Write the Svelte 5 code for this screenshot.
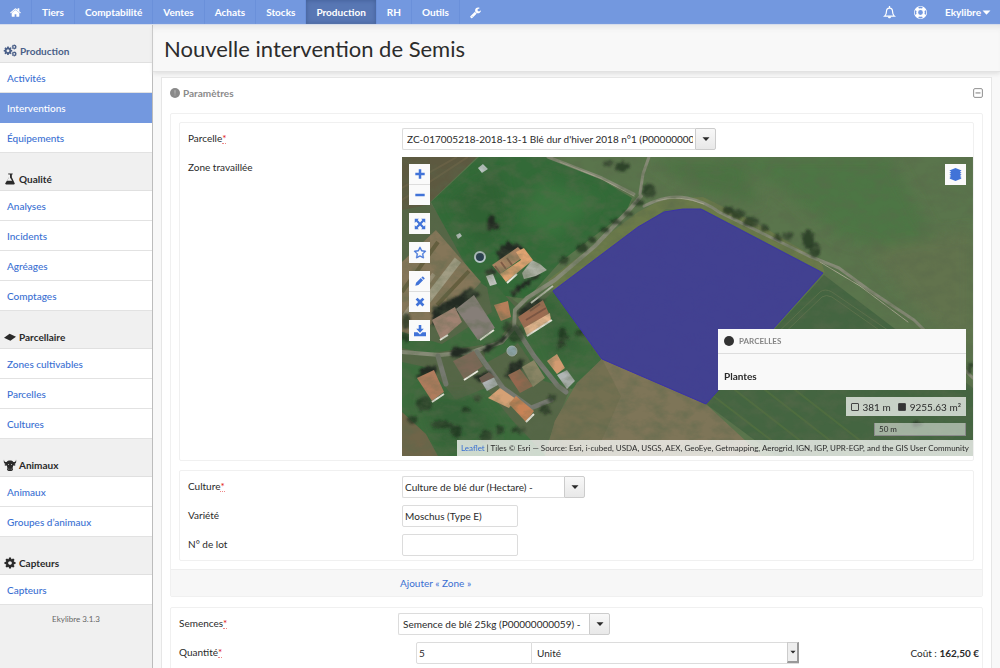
<script>
  const menu = ['Tiers', 'Comptabilité', 'Ventes', 'Achats', 'Stocks', 'Production', 'RH', 'Outils'];
  const groups = [
    { title: 'Production', icon: 'gears', items: ['Activités', 'Interventions', 'Équipements'] },
    { title: 'Qualité', icon: 'flask', items: ['Analyses', 'Incidents', 'Agréages', 'Comptages'] },
    { title: 'Parcellaire', icon: 'land', items: ['Zones cultivables', 'Parcelles', 'Cultures'] },
    { title: 'Animaux', icon: 'cow', items: ['Animaux', 'Groupes d’animaux'] },
    { title: 'Capteurs', icon: 'gear', items: ['Capteurs'] }
  ];
  const tools = [
    [['plus', 'Zoom avant'], ['minus', 'Zoom arrière']],
    [['expand', 'Plein écran']],
    [['star', 'Favori']],
    [['pencil', 'Modifier'], ['cross', 'Supprimer']],
    [['download', 'Importer']]
  ];
  const gearPath = 'M1152 896q0-106-75-181t-181-75-181 75-75 181 75 181 181 75 181-75 75-181zm512-109v222q0 12-8 23t-20 13l-185 28q-19 54-39 91 35 50 107 138 10 12 10 25t-9 23q-27 37-99 108t-94 71q-12 0-26-9l-138-108q-44 23-91 38-16 136-29 186-7 28-36 28h-222q-14 0-24.5-8.5t-11.5-21.5l-28-184q-49-16-90-37l-141 107q-10 9-25 9-14 0-25-11-126-114-165-168-7-10-7-23 0-12 8-23 15-21 51-66.5t54-70.5q-27-50-41-99l-183-27q-13-2-21-12.5t-8-23.5v-222q0-12 8-23t19-13l186-28q14-46 39-92-40-57-107-138-10-12-10-24 0-10 9-23 26-36 98.5-107.5t94.5-71.5q13 0 26 10l138 107q44-23 91-38 16-136 29-186 7-28 36-28h222q14 0 24.5 8.5t11.5 21.5l28 184q49 16 90 37l142-107q9-9 24-9 13 0 25 10 129 119 165 170 7 8 7 22 0 12-8 23-15 21-51 66.5t-54 70.5q26 50 41 98l183 28q13 2 21 12.5t8 23.5z';
  // Tree crowns of the aerial view: centre, radii
  const trees = [
    [649, 191, 7, 7], [639, 203, 5, 4], [628, 214, 4, 3], [582, 248, 6, 5], [564, 260, 5, 4],
    [728, 210, 5, 4], [738, 214, 7, 5], [751, 222, 8, 5], [765, 228, 4, 3], [788, 236, 5, 4], [808, 240, 6, 10], [815, 250, 6, 7], [778, 238, 4, 3],
    [516, 334, 8, 9], [508, 327, 5, 5], [563, 336, 4, 8], [560, 345, 3, 4], [580, 333, 4, 3], [424, 404, 8, 7], [432, 375, 3, 4],
    [442, 425, 11, 4], [456, 431, 6, 6], [486, 436, 6, 6], [478, 398, 4, 3], [518, 430, 7, 3], [545, 410, 6, 4], [552, 398, 4, 4], [412, 420, 5, 4],
    [500, 430, 4, 4], [466, 410, 5, 3], [622, 167, 7, 5], [608, 164, 5, 3], [604, 230, 5, 3], [592, 240, 4, 3], [616, 222, 5, 3],
    [406, 322, 4, 8], [405, 337, 4, 5], [918, 424, 5, 3], [970, 368, 3, 6]
  ];
  const roofs = [
    ['522,273 532,260 540,264 547,270 536,276 524,279', '#aeb2a6'],
    ['492,265 518,247 526,255 500,274', '#a98362'], ['500,274 521,260 516,252 524,248 533,260 506,282', '#dfa371'],
    ['486,276 493,274 497,284 490,286', '#bfc2bd'], ['494,305 508,301 511,317 501,321', '#b67f5a'],
    ['456,309 474,295 495,328 478,340', '#867e78'], ['432,320 455,307 462,322 441,340', '#a08272'],
    ['518,317 543,300 551,318 526,332', '#9c6c51'], ['524,328 550,313 551,321 527,336', '#e3b48c'],
    ['453,361 474,351 483,366 464,379', '#7f6858'], ['417,378 434,370 444,392 432,401', '#b07b5d'],
    ['508,375 520,369 533,386 520,393', '#956850'], ['522,367 534,360 545,378 533,387', '#8a8565'],
    ['547,361 557,354 565,368 557,374', '#d39b71'], ['557,375 567,370 575,381 567,389', '#b0b5b4'],
    ['488,398 500,388 516,399 509,408', '#d5a174'], ['509,404 516,396 534,411 526,422', '#c88357'],
    ['481,381 493,376 498,385 487,391', '#aeb3b5'], ['479,378 489,372 495,377 482,383', '#6d5a50']
  ];
</script>

{#snippet icon(name)}
  <svg class="icon {name}" viewBox={['home', 'wrench', 'gear', 'flask', 'star'].includes(name) ? '64 64 1664 1664' : '0 0 16 16'} aria-hidden="true">
    {#if name === 'home'}
      <path d="M1472 992v480q0 26-19 45t-45 19h-384v-384h-256v384h-384q-26 0-45-19t-19-45v-480q0-1 .5-3t.5-3l575-474 575 474q1 2 1 6zm223-69l-62 74q-8 9-21 11h-3q-13 0-21-7l-692-577-692 577q-12 8-24 7-13-2-21-11l-62-74q-8-10-7-23.5t11-21.5l719-599q32-26 76-26t76 26l244 204v-195q0-14 9-23t23-9h192q14 0 23 9t9 23v408l219 182q10 8 11 21.5t-7 23.5z" />
    {:else if name === 'wrench'}
      <path d="M448 1472q0-26-19-45t-45-19-45 19-19 45 19 45 45 19 45-19 19-45zm644-420l-682 682q-37 37-90 37-52 0-91-37l-106-108q-38-36-38-90 0-53 38-91l681-681q39 98 114.5 173.5t173.5 114.5zm634-435q0 39-23 106-47 134-164.5 217.5t-258.5 83.5q-185 0-316.5-131.5t-131.5-316.5 131.5-316.5 316.5-131.5q58 0 121.5 16.5t107.5 46.5q16 11 16 28t-16 28l-293 169v224l193 107q5-3 79-48.5t135.5-81 70.5-35.5q15 0 23.5 10t8.5 25z" />
    {:else if name === 'gear'}
      <path d={gearPath} />
    {:else if name === 'gears'}
      <path d={gearPath} transform="translate(-1.2 2.2) scale(.0068)" />
      <path d={gearPath} transform="translate(9 0) scale(.004)" />
      <path d={gearPath} transform="translate(9 8.6) scale(.004)" />
    {:else if name === 'flask'}
      <path d="M1527 1447q56 89 21.5 153t-140.5 64h-1024q-106 0-140.5-64t21.5-153l503-793v-399h-64q-26 0-45-19t-19-45 19-45 45-19h512q26 0 45 19t19 45-19 45-45 19h-64v399zm-779-725l-272 430h712l-272-430-20-31v-436h-128v436z" />
    {:else if name === 'star'}
      <path d="M1201 1004l306-297-422-62-189-382-189 382-422 62 306 297-73 421 378-199 377 199zm527-357q0 22-26 48l-363 354 86 500q1 7 1 20 0 50-41 50-19 0-40-12l-449-236-449 236q-22 12-40 12-21 0-31.5-14.5t-10.5-35.5q0-6 2-20l86-500-364-354q-25-27-25-48 0-37 56-46l502-73 225-455q19-41 49-41t49 41l225 455 502 73q56 9 56 46z" />
    {:else if name === 'land'}
      <path d="M0 9 7.500 3.500 16 7.500 8.500 13z" />
    {:else if name === 'cow'}
      <path d="M0 .5C0 3 1 4 3.500 4c1-1.500 2.500-2 4.500-2s3.500.5 4.500 2C15 4 16 3 16 .5c1 3-.2 5.500-2 6.200l1.500 1.300c-1 1-2.300 1-3.300.7L11.500 12l.5 2.500L10 16H6l-2-1.500.5-2.500-.7-3.300C2.800 9 1.500 9 .5 8L2 6.700C.2 6-1 3.500 0 .5z" />
      <path class="hole" d="M5.300 6.500h1.200v1.200H5.300zM9.500 6.500h1.200v1.200H9.500zM6 13h1v1H6zM9 13h1v1H9z" />
    {:else if name === 'bell'}
      <path class="line" d="M2 12.500C3.800 11 4.300 9 4.300 6.500 4.300 4 5.800 2.500 8 2.500s3.700 1.500 3.700 4c0 2.500.5 4.500 2.300 6z" />
      <path d="M7.200 0h1.600v2.500H7.200zM6 13h4c0 1.400-.8 2.200-2 2.200S6 14.400 6 13z" />
    {:else if name === 'ring'}
      <circle class="line thick" cx="8" cy="8" r="5.200" />
      <circle class="line thin" cx="8" cy="8" r="7.200" />
      <path class="gap" d="M5.700 2.200a6 6 0 0 1 4.600 0M5.700 13.800a6 6 0 0 0 4.600 0M2.200 5.700a6 6 0 0 0 0 4.600M13.800 5.700a6 6 0 0 1 0 4.600" />
    {:else if name === 'caret'}
      <path d="M1 4.500h14L8 12z" />
    {:else if name === 'plus'}
      <path d="M6 .5h4V6h5.500v4H10v5.500H6V10H.5V6H6z" />
    {:else if name === 'minus'}
      <path d="M.5 6h15v4H.5z" />
    {:else if name === 'expand'}
      <path d="M1 1h5.500L4.800 2.800 8 6l3.200-3.200L9.500 1H15v5.500l-1.800-1.700L10 8l3.200 3.200L15 9.500V15H9.500l1.700-1.800L8 10l-3.200 3.200L6.500 15H1V9.500l1.800 1.700L6 8 2.800 4.800 1 6.500z" />
    {:else if name === 'pencil'}
      <path d="M.5 15.500l1.200-4.800 7.600-7.500 3.600 3.600-7.500 7.500zM10.200 2.300l1.300-1.300q.8-.7 1.600 0l2 2q.7.8 0 1.600l-1.300 1.300z" />
    {:else if name === 'cross'}
      <path d="M4 1 8 4.900 12 1l3 3-3.900 4L15 12l-3 3-4-3.900L4 15l-3-3 3.900-4L1 4z" />
    {:else if name === 'download'}
      <path d="M6.300 0h3.400v5H13L8 10.200 3 5h3.300zM0 9.500h4.800L8 12.600l3.200-3.100H16v5.500H0z" />
    {:else if name === 'layers'}
      <path d="M8 0l7.500 3.200L13.300 4.500l2.200 1.300L13.300 7.100l2.200 1.300-2.200 1.300 2.200 1.300-1.500.9 1.500.9L8 16 .5 12.800l1.500-.9L.5 11l2.200-1.300L.5 8.400l2.200-1.300L.5 5.800l2.200-1.300L.5 3.200z" />
    {:else if name === 'alert'}
      <circle cx="8" cy="8" r="8" />
      <path class="mark" d="M7 3.500h2L8.700 9H7.300zM7.200 10.500h1.600V12H7.200z" />
    {:else if name === 'collapse'}
      <rect class="line" x="1" y="1" width="14" height="14" rx="2" />
      <path d="M4 7h8v1.800H4z" />
    {/if}
  </svg>
{/snippet}

{#snippet combo(id, value, kind)}
  <div class="combo {kind}">
    <input {id} type="text" {value} />
    <button type="button" aria-label="Ouvrir la liste">{@render icon('caret')}</button>
  </div>
{/snippet}

<div class="page">
  <header>
    <nav>
      <a href="#accueil" aria-label="Accueil">{@render icon('home')}</a>
      {#each menu as entry}
        <a href="#{entry}" class:active={entry === 'Production'}>{entry}</a>
      {/each}
      <a class="last" href="#reglages" aria-label="Réglages">{@render icon('wrench')}</a>
    </nav>
    <div class="account">
      <button type="button" aria-label="Notifications">{@render icon('bell')}</button>
      <button type="button" aria-label="Aide">{@render icon('ring')}</button>
      <button type="button">Ekylibre{@render icon('caret')}</button>
    </div>
  </header>

  <div class="body">
    <aside>
      {#each groups as group, index}
        <section>
          <h2 class:current={index === 0}>{@render icon(group.icon)}{group.title}</h2>
          <ul>
            {#each group.items as item}
              <li><a href="#{item}" class:active={item === 'Interventions'}>{item}</a></li>
            {/each}
          </ul>
        </section>
      {/each}
      <p>Ekylibre 3.1.3</p>
    </aside>

    <main>
      <div class="title"><h1>Nouvelle intervention de Semis</h1></div>

      <form class="panel">
        <div class="panel-head">
          <h2>{@render icon('alert')}Paramètres</h2>
          <button type="button" aria-label="Replier">{@render icon('collapse')}</button>
        </div>

        <div class="block">
          <div class="nested">
            <div class="box">
              <div class="row">
                <label for="parcelle">Parcelle<abbr title="obligatoire">*</abbr></label>
                {@render combo('parcelle', "ZC-017005218-2018-13-1 Blé dur d'hiver 2018 n°1 (P00000000079)", 'wide')}
              </div>
              <div class="row">
                <span class="label">Zone travaillée</span>
                <div class="map">
                  <svg class="aerial" viewBox="402 157 571 299" preserveAspectRatio="xMidYMid slice" aria-label="Vue aérienne">
                    <defs>
                      <filter id="grain" x="0" y="0" width="100%" height="100%">
                        <feTurbulence type="fractalNoise" baseFrequency=".06 .09" numOctaves="5" seed="7" />
                        <feColorMatrix values="0 0 0 0 .1  0 0 0 0 .14  0 0 0 0 .07  1.1 0 0 0 -.42" />
                      </filter>
                      <filter id="rough" x="-20%" y="-20%" width="140%" height="140%">
                        <feTurbulence type="fractalNoise" baseFrequency=".25" numOctaves="2" seed="3" result="noise" />
                        <feDisplacementMap in="SourceGraphic" in2="noise" scale="6" xChannelSelector="R" yChannelSelector="G" />
                        <feGaussianBlur stdDeviation=".8" />
                      </filter>
                      <filter id="edge"><feGaussianBlur stdDeviation=".5" /></filter>
                      <filter id="soft"><feGaussianBlur stdDeviation="7" /></filter>
                      <clipPath id="crop"><path d="M824 275 706 404 776 456H973V388z" /></clipPath>
                    </defs>
                    <path fill="#5a754c" d="M402 157h571v299H402z" />
                    <g filter="url(#soft)">
                      <path fill="#4e7645" d="M720 157l170 0 60 110-110-30-60-50z" />
                      <path fill="#62734d" d="M870 250l103-20v120l-50-35z" />
                      <path fill="#4c7243" d="M650 160l90 0 20 45-60-14z" />
                    </g>
                    <path fill="#556646" d="M402 157h73l-45 45 45 68 45 35 33-14 49 68-30 25-30 72H402z" />
                    <path fill="#5d5940" d="M402 157h75l-50 48-25 5z" />
                    <path fill="none" stroke="#70664a" stroke-width="2" opacity=".6" d="M402 188l55-31M402 200l66-43" />
                    <path fill="#336a38" d="M431 202l48-45h69l54 23 30 18-6 14-66 50-33 37-28-4-26-17z" />
                    <g filter="url(#soft)" opacity=".7">
                      <path fill="#3d783f" d="M540 180l60 20-50 40-30-20z" />
                      <path fill="#2d5f33" d="M450 200l50-30 10 60-30 20z" />
                    </g>
                    <path fill="#857659" d="M402 262l34-32 45 52-20 22-59 40z" />
                    <g fill="none" stroke-width="4">
                      <path stroke="#a29d84" stroke-width="8" d="M424 304l34-44" />
                      <path stroke="#9c9178" d="M404 316l30-42" />
                      <path stroke="#655e3e" d="M402 292l36-50M437 305l32-34" />
                    </g>
                    <path fill="#3c6b3c" d="M484 272l34 38-20 32-70 12-26-6v-16l40 12 50-32zM483 345l34-16 36-38 49 70-30 28-28-8-26-38-14 10-18 10zM402 362l28 6 26 32 30-12 26 32 34 36H402z" />
                    <g filter="url(#soft)" opacity=".7"><path fill="#335f36" d="M530 300l25 0 30 50-30 10zM420 395l50 0 30 40-60 15z" /></g>
                    <path fill="#7e7558" d="M602 359l104 45 56 52H545l10-35 22-38z" />
                    <path fill="#716d4f" d="M602 359l-25 24-22 38-10 35h50l26-60z" opacity=".7" />
                    <path fill="#6f6549" d="M402 412l24 22 12 22H402z" />
                    <path fill="#446541" d="M824 275 706 404 776 456H973V388z" />
                    <g clip-path="url(#crop)" fill="none" stroke="#62764f" stroke-width="1" opacity=".8">
                      <path d="M770 340l50-48q5-4 12 0l110 75M774 343l48-46q4-3 10 0l100 70" />
                      <path d="M712 395l80 61M730 386l90 70M755 382l95 74M785 382l95 74" stroke="#52703f" stroke-width="2" />
                    </g>
                    <path fill="#6f7c4a" opacity=".8" d="M548 280l90-68 25-13 40-2 50 24 68 40 4 12-122-64h-37l-26 18-85 64z" />
                    <g fill="none" stroke-linecap="round" stroke-linejoin="round" filter="url(#edge)">
                      <g stroke="#868a76" stroke-width="3">
                        <path d="M402 352l38 3 32-3 30-10 12-14 1-18 12-12 28-18 40-34 36-38 10-12" stroke-width="4" />
                        <path d="M548 157l54 21 32 16M640 194l3-20 6-17" />
                        <path d="M644 206q24-12 43-8t32 14l90 44 30 12 30 22 45 30 59 58" />
                      </g>
                      <path stroke="#a6a58f" stroke-width="1" d="M560 162l40 16 34 18M656 201q24-7 48 3M820 262l40 24 48 36" />
                      <path stroke="#76796f" stroke-width="5" d="M477 352l26 36 28 20 20-8M516 328l18 28 24 30 8 6M438 356l8 28" />
                    </g>
                    <g fill="#202c20" filter="url(#rough)">
                      {#each trees as [x, y, rx, ry]}
                        <ellipse cx={x} cy={y} {rx} {ry} opacity=".7" />
                      {/each}
                      <path d="M491 214l5 8 5 4-4 3-9 1-1-8zM497 251l10-9 14 3 4 7-24 16zM484 271l8-4 5 5-9 4zM432 308l26-12 12-9 10 7-22 20-26 12zM517 313l20-16 8 4-20 18zM451 355l2-9 21 4-18 8zM417 378l4-10 15-3 2 7zM505 376l5-13 14-4-3 11-9 9zM474 376l14-5 5 4-14 6zM510 292l30-21v4l-26 21zM482 349l24-14v5l-22 14z" />
                    </g>
                    <path fill="none" stroke="#c8cabd" stroke-width="2" d="M531 303l22-17" filter="url(#edge)" />
                    <g filter="url(#edge)">
                      {#each roofs as [points, color]}
                        <polygon {points} fill={color} />
                      {/each}
                      <g fill="none" stroke="#eceae0" stroke-width="2">
                        <path d="M507 283l10-9M527 336l25-16M464 380l14-9M432 402l12-8M526 422l8-8M440 340l8-5M480 340l14-10" />
                      </g>
                      <g stroke="#6d4c3c" stroke-width="2" opacity=".7"><path d="M495 266l5 7M501 262l5 7M507 258l5 7M530 311l10-7M526 320l20-12" /></g>
                      <circle cx="480" cy="257" r="5" fill="#2c3f50" stroke="#b7c6c9" stroke-width="2" />
                      <circle cx="512" cy="351" r="5" fill="#8ba2a6" stroke="#a5b0ae" />
                      <path fill="#bac5c2" d="M478 168l5-4 5 5-6 4zM456 235l4-2 2 3-4 3z" />
                    </g>
                    <path filter="url(#grain)" d="M402 157h571v299H402z" />
                    <path fill="#413d97" fill-opacity=".93" stroke="#3b32a8" d="M553 291 638 227 664 212 683 209H701L823 273 706 404 602 359z" />
                  </svg>

                  <div class="tools">
                    {#each tools as set}
                      <div class="set">
                        {#each set as [name, label]}
                          <button type="button" aria-label={label}>{@render icon(name)}</button>
                        {/each}
                      </div>
                    {/each}
                  </div>
                  <button class="layer-button" type="button" aria-label="Couches">{@render icon('layers')}</button>

                  <div class="corner">
                    <div class="legend">
                      <h3><i></i>PARCELLES</h3>
                      <p>Plantes</p>
                    </div>
                    <div class="measure"><i></i><span>381 m</span><i class="full"></i><span>9255.63 m²</span></div>
                    <div class="scale">50 m</div>
                  </div>
                  <div class="credit"><a href="#leaflet">Leaflet</a> | Tiles © Esri — Source: Esri, i-cubed, USDA, USGS, AEX, GeoEye, Getmapping, Aerogrid, IGN, IGP, UPR-EGP, and the GIS User Community</div>
                </div>
              </div>
            </div>

            <div class="box">
              <div class="row">
                <label for="culture">Culture<abbr title="obligatoire">*</abbr></label>
                {@render combo('culture', 'Culture de blé dur (Hectare) -', 'short')}
              </div>
              <div class="row">
                <label for="variete">Variété</label>
                <input id="variete" class="text" type="text" value="Moschus (Type E)" />
              </div>
              <div class="row">
                <label for="lot">N° de lot</label>
                <input id="lot" class="text" type="text" />
              </div>
            </div>
          </div>
          <div class="add"><a href="#zone">Ajouter « Zone »</a></div>
        </div>

        <div class="block inputs">
          <div class="row">
            <label for="semences">Semences<abbr title="obligatoire">*</abbr></label>
            {@render combo('semences', 'Semence de blé 25kg (P00000000059) -', 'medium')}
          </div>
          <div class="row">
            <label for="quantite">Quantité<abbr title="obligatoire">*</abbr></label>
            <div class="quantity">
              <input id="quantite" class="text" type="text" value="5" />
              <div class="unit">
                <select aria-label="Unité"><option>Unité</option></select>
                <span>{@render icon('caret')}</span>
              </div>
              <p>Coût : <b>162,50 €</b></p>
            </div>
          </div>
        </div>
      </form>
    </main>
  </div>
</div>

<style>
  :global(body) { background: #f8f8f8; overflow: hidden; }
  .page { font: 10px/16px Lato, sans-serif; color: #2a2a2a; height: 100vh; overflow: hidden; display: flex; flex-direction: column; }
  .page * { box-sizing: border-box; }
  h1, h2, h3, p, ul { margin: 0; padding: 0; }
  a { color: #3a6fd2; text-decoration: none; }
  button, input, select { font: inherit; color: inherit; margin: 0; border-radius: 0; }
  button { padding: 0; border: 0; background: none; display: flex; align-items: center; justify-content: center; }
  .icon { width: 12px; height: 12px; fill: currentColor; display: block; flex: none; overflow: visible; }
  .line { fill: none; stroke: currentColor; stroke-width: 1.5; }

  header { height: 25px; flex: none; display: flex; justify-content: space-between; background: #7398df; border-bottom: 1px solid #d5dcec; font-weight: 700; color: #fff; }
  nav, .account { display: flex; }
  nav a { display: flex; align-items: center; padding: 0 10px; color: #fff; border-right: 1px solid #6a90da; }
  nav a.active { background: #5877b4; box-shadow: inset 0 0 5px #3f5c94; }
  nav a.last { border: 0; }
  nav .icon { width: 11px; height: 11px; }
  .account { gap: 18px; padding-right: 9px; }
  .account button { gap: 1px; }
  .bell, .ring { width: 13px; height: 13px; }
  .account .caret { width: 9px; height: 9px; }
  .thick { stroke-width: 4.500; }
  .thin { stroke-width: 1.500; }
  .gap { fill: none; stroke: #7398df; stroke-width: 2; }

  .body { flex: 1; display: flex; min-height: 0; }
  aside { width: 153px; flex: none; background: #f0f0f0; border-right: 1px solid #bcbcbc; }
  aside h2 { height: 38px; padding: 14px 4px 0; display: flex; align-items: center; gap: 3px; font-size: 10px; line-height: 16px; border-bottom: 1px solid #e0e0e0; }
  aside h2.current { color: #4a5f88; }
  .gears { width: 13px; height: 13px; }
  .hole { fill: #f0f0f0; }
  ul { list-style: none; }
  li { height: 30px; background: #fff; border-bottom: 1px solid #e2e2e2; }
  li a { display: block; height: 30px; padding: 7px; font-weight: 500; }
  li a.active { background: #7398df; color: #fff; }
  aside p { font-size: 8px; color: #666; text-align: center; padding-top: 6px; }

  main { flex: 1; min-width: 0; background: #f8f8f8; }
  .title { height: 47px; padding: 1px 11px 0; display: flex; align-items: center; background: #f8f8f8; border-bottom: 1px solid #e2e2e2; box-shadow: 0 2px 4px #e0e0e0, inset 0 6px 6px -4px #e4e4e4; }
  h1 { font-size: 22px; line-height: 28px; font-weight: 400; color: #2c2c2c; }
  .panel { margin: 5px 8px 0; padding: 0 8px; background: #fff; border: 1px solid #e6e6e6; }
  .panel-head { height: 35px; padding-bottom: 5px; display: flex; align-items: center; justify-content: space-between; }
  .panel-head h2 { display: flex; align-items: center; gap: 3px; font-size: 10px; line-height: 16px; color: #8a8a8a; }
  .panel-head button { color: #888; }
  .alert, .collapse { width: 10px; height: 10px; }
  .mark { fill: #b5b5b5; }

  .block { border: 1px solid #f0f0f0; border-radius: 2px; margin-bottom: 10px; }
  .nested { padding: 8px; display: flex; flex-direction: column; gap: 9px; }
  .box { border: 1px solid #f0f0f0; border-radius: 2px; padding: 5px 0 4px 8px; display: flex; flex-direction: column; gap: 7px; }
  .row { display: grid; grid-template-columns: 3fr 8fr; align-items: start; }
  .row label, .label { padding-top: 2px; }
  abbr { color: #e01010; text-decoration: none; border-bottom: 1px dotted #e88; line-height: 10px; display: inline-block; }
  input, select { height: 22px; border: 1px solid #dcdcdc; background: #fff; outline: 0; padding: 0 2px; min-width: 0; }
  .text { width: 116px; border-radius: 2px; }
  .combo { display: flex; height: 22px; }
  .combo input { flex: 1; border-radius: 2px 0 0 2px; border-right: 0; padding-left: 4px; }
  .combo button { width: 21px; border: 1px solid #ccc; border-radius: 0 2px 2px 0; background: linear-gradient(#f8f8f8, #e8e8e8); }
  .combo .icon { width: 8px; height: 8px; }
  .wide { width: 314px; }
  .short { width: 183px; }
  .short input { padding-left: 2px; }
  .medium { width: 212px; }

  .map { position: relative; height: 299px; overflow: hidden; }
  .aerial { display: block; width: 100%; height: 100%; }
  .tools { position: absolute; left: 7px; top: 7px; display: flex; flex-direction: column; gap: 8px; }
  .set { display: flex; flex-direction: column; gap: 1px; background: #ddd; }
  .set button, .layer-button { width: 21px; height: 20px; background: #fafafa; color: #4173d8; }
  .set button:only-child, .layer-button { height: 21px; }
  .set .plus, .set .minus, .set .cross, .set .pencil { width: 10px; height: 10px; }
  .star { stroke: currentColor; stroke-width: 50; }
  .layer-button { position: absolute; right: 7px; top: 7px; }
  .layers { width: 13px; height: 13px; }
  .corner { position: absolute; right: 7px; bottom: 20px; display: flex; flex-direction: column; align-items: flex-end; gap: 7px; }
  .legend { width: 248px; background: #f9f9f9; }
  .legend h3 { height: 25px; padding: 0 6px; display: flex; align-items: center; gap: 5px; font-size: 8px; color: #858585; border-bottom: 1px solid #ddd; }
  .legend h3 i { width: 10px; height: 10px; border-radius: 50%; background: #333; }
  .legend p { padding: 14px 6px 6px; font-weight: 700; }
  .measure { display: flex; align-items: center; gap: 4px; height: 19px; padding: 0 5px; background: rgba(255, 255, 255, .7); }
  .measure i { width: 8px; height: 8px; border: 1px solid #444; border-radius: 1px; }
  .measure .full { background: #333; margin-left: 3px; }
  .scale { width: 92px; height: 13px; padding-left: 4px; font-size: 8px; line-height: 12px; border: 1px solid #8a8a8a; border-top: 0; background: rgba(255, 255, 255, .5); }
  .credit { position: absolute; right: 0; bottom: 0; height: 16px; padding: 0 4px; font-size: 8px; white-space: nowrap; background: rgba(255, 255, 255, .75); }

  .add { height: 27px; padding-left: 229px; display: flex; align-items: center; background: #f7f7f7; border-top: 1px solid #eee; }
  .inputs { padding: 5px 0 5px 8px; display: flex; flex-direction: column; gap: 7px; }
  .quantity { display: flex; padding: 0 3px 0 18px; }
  .quantity .text { border-radius: 2px 0 0 2px; }
  .unit { position: relative; width: 267px; }
  select { width: 100%; appearance: none; border-left: 0; padding: 0 5px; }
  .unit span { position: absolute; top: 0; right: 0; bottom: 1px; width: 12px; display: flex; align-items: center; justify-content: center; background: #eee; border: 1px solid #ccc; border-right: 2px solid #999; border-bottom: 2px solid #999; pointer-events: none; }
  .unit .icon { width: 6px; height: 6px; }
  .quantity p { margin-left: auto; padding-top: 3px; }
</style>
